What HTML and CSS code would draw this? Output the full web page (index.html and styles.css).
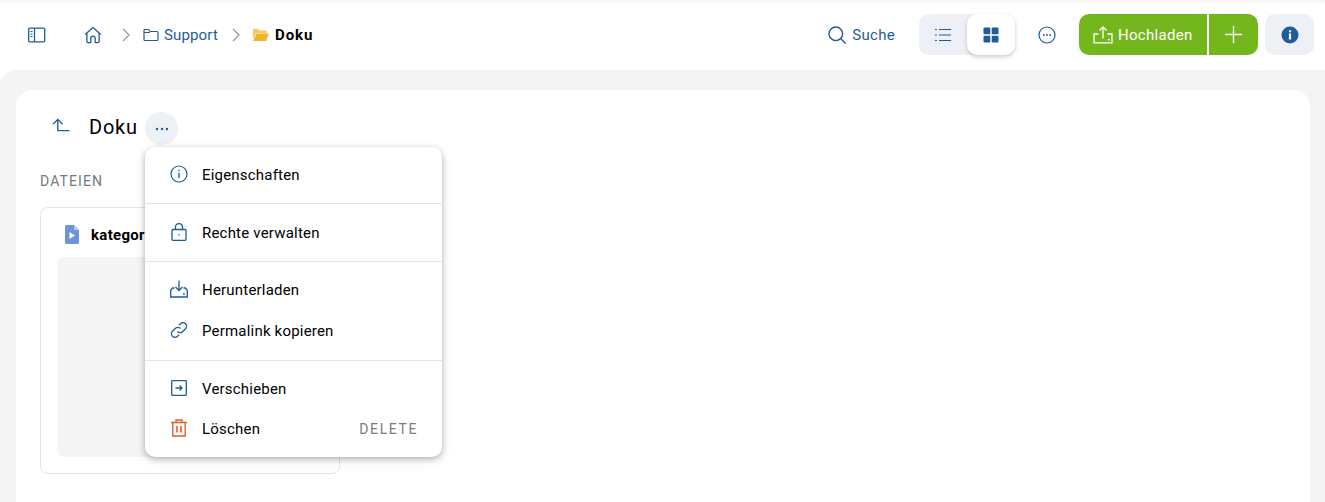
FILE: index.html
```html
<!DOCTYPE html>
<html lang="de">
<head>
<meta charset="utf-8">
<title>Doku</title>
<link rel="stylesheet" href="styles.css">
</head>
<body>
<header class="topbar">
  <button class="plain sidebar-btn" aria-label="Seitenleiste">
    <svg width="20" height="20" viewBox="0 0 20 20" fill="none" stroke="#1f5c99" stroke-width="1.3"><rect x="1.700" y="3.200" width="16" height="13.600" rx="1"/><path d="M7.500 3.200v13.600"/><path d="M3.500 6.500h2M3.500 9h2M3.500 11.500h2" stroke-width="1"/></svg>
  </button>
  <nav class="crumbs">
    <svg class="home" width="20" height="20" viewBox="0 0 20 20" fill="none" stroke="#1f5c99" stroke-width="1.3" stroke-linejoin="round"><path d="M2.200 9.500 10 2.400l7.800 7.100M3.900 8v8.600a1 1 0 0 0 1 1h2.900v-4.300a2.200 2.200 0 0 1 4.400 0v4.300h2.900a1 1 0 0 0 1-1V8"/></svg>
    <svg class="chev" width="10" height="16" viewBox="0 0 10 16" fill="none" stroke="#8f9bab" stroke-width="1.300"><path d="m2 2 6 6-6 6"/></svg>
    <svg class="folder" width="16" height="14" viewBox="0 0 16 14" fill="none" stroke="#1f5c99" stroke-width="1.200"><path d="M1 2.500a1 1 0 0 1 1-1h3.600l1.400 2h7a1 1 0 0 1 1 1v7a1 1 0 0 1-1 1H2a1 1 0 0 1-1-1zM1 4.500h6"/></svg>
    <span class="crumb-link">Support</span>
    <svg class="chev" width="10" height="16" viewBox="0 0 10 16" fill="none" stroke="#8f9bab" stroke-width="1.300"><path d="m2 2 6 6-6 6"/></svg>
    <svg class="folder" width="16" height="12" viewBox="0 0 16 12"><path d="M0 1a1 1 0 0 1 1-1h4l1.500 1.500H13a1 1 0 0 1 1 1V4H3.500L0 10z" fill="#f4c95d"/><path d="M3.600 4.500H16L13 12H0z" fill="#efb428"/></svg>
    <span class="crumb-current">Doku</span>
  </nav>
  <div class="tools">
    <div class="search">
      <svg width="20" height="20" viewBox="0 0 20 20" fill="none" stroke="#1f5c99" stroke-width="1.400"><circle cx="8.800" cy="8.800" r="6.800"/><path d="m13.800 13.800 4.800 4.800"/></svg>
      <span>Suche</span>
    </div>
    <div class="switch">
      <span class="switch-opt">
        <svg width="18" height="14" viewBox="0 0 18 14" fill="none" stroke="#1f5c99" stroke-width="1.200"><path d="M5 1.500h12M5 7h12M5 12.500h12"/><path d="M1 1.500h1.800M1 7h1.800M1 12.500h1.800"/></svg>
      </span>
      <span class="switch-opt active">
        <svg width="16" height="16" viewBox="0 0 16 16" fill="#1f5c99"><rect x="0.500" y="0.500" width="6.800" height="6.800" rx="1"/><rect x="8.700" y="0.500" width="6.800" height="6.800" rx="1"/><rect x="0.500" y="8.700" width="6.800" height="6.800" rx="1"/><rect x="8.700" y="8.700" width="6.800" height="6.800" rx="1"/></svg>
      </span>
    </div>
    <button class="plain more-btn" aria-label="Mehr">
      <svg width="18" height="18" viewBox="0 0 18 18" fill="none" stroke="#1f5c99" stroke-width="1.200"><circle cx="9" cy="9" r="8"/><circle cx="5.800" cy="9" r=".9" fill="#1f5c99" stroke="none"/><circle cx="9" cy="9" r=".9" fill="#1f5c99" stroke="none"/><circle cx="12.200" cy="9" r=".9" fill="#1f5c99" stroke="none"/></svg>
    </button>
    <div class="upload">
      <span class="upload-main">
        <svg width="20" height="18" viewBox="0 0 20 18" fill="none" stroke="#fff" stroke-width="1.300"><path d="M5.500 8H1v8.800h18V8h-4.500"/><path d="M10 12.500V1M6.500 4.500 10 1l3.500 3.500"/><path d="M15 13.800h1.800"/></svg>
        Hochladen
      </span>
      <span class="upload-plus">
        <svg width="17" height="17" viewBox="0 0 17 17" stroke="#fff" stroke-width="1.400"><path d="M8.500 0v17M0 8.500h17"/></svg>
      </span>
    </div>
    <button class="info-btn" aria-label="Info">
      <svg width="18" height="18" viewBox="0 0 18 18"><circle cx="9" cy="9" r="8.500" fill="#1f5c99"/><rect x="7.900" y="7.500" width="2.200" height="6" fill="#fff"/><rect x="7.900" y="4.300" width="2.200" height="2" fill="#fff"/></svg>
    </button>
  </div>
</header>
<main class="shell">
  <section class="panel">
    <div class="title-row">
      <svg class="back" width="18" height="14" viewBox="0 0 18 14" fill="none" stroke="#1f5c99" stroke-width="1.300"><path d="M17.500 12.700H5.800V1.500M1 6.200l4.800-4.800 4.800 4.800"/></svg>
      <h1>Doku</h1>
      <div class="menu-anchor">
        <button class="dots" aria-label="Aktionen">
          <svg width="14" height="4" viewBox="0 0 14 4" fill="#1f5c99"><circle cx="2" cy="2" r="1.200"/><circle cx="7" cy="2" r="1.200"/><circle cx="12" cy="2" r="1.200"/></svg>
        </button>
        <div class="menu">
          <div class="group">
            <div class="item">
              <svg width="18" height="18" viewBox="0 0 18 18" fill="none" stroke="#1f5c99" stroke-width="1.200"><circle cx="9" cy="9" r="8"/><path d="M9 8v5" stroke-width="1.400"/><path d="M9 4.800v1.500" stroke-width="1.400"/></svg>
              <span>Eigenschaften</span>
            </div>
          </div>
          <div class="group group-single">
            <div class="item">
              <svg width="18" height="18" viewBox="0 0 18 18" fill="none" stroke="#1f5c99" stroke-width="1.300"><rect x="2" y="6.500" width="14" height="10.800" rx="1"/><path d="M5.500 6.500V4a3.500 3.500 0 0 1 7 0v2.500"/><circle cx="9" cy="11.800" r=".8" fill="#1f5c99" stroke="none"/></svg>
              <span>Rechte verwalten</span>
            </div>
          </div>
          <div class="group group-pair">
            <div class="item">
              <svg width="18" height="18" viewBox="0 0 18 18" fill="none" stroke="#1f5c99" stroke-width="1.300"><path d="M4.500 8H2.500L.7 10.500V17h16.600v-6.500L15.500 8h-2"/><path d="M9 .5v10M5.500 7 9 10.500 12.500 7"/><path d="M13 14h1.800"/></svg>
              <span>Herunterladen</span>
            </div>
            <div class="item">
              <svg width="18" height="18" viewBox="0 0 18 18" fill="none" stroke="#1f5c99" stroke-width="1.300"><path d="M7.500 10.500a3.400 3.400 0 0 0 5 .2l3-3a3.500 3.500 0 0 0-5-5L9 4.200"/><path d="M10.500 7.500a3.400 3.400 0 0 0-5-.2l-3 3a3.500 3.500 0 0 0 5 5L9 13.800"/></svg>
              <span>Permalink kopieren</span>
            </div>
          </div>
          <div class="group group-pair">
            <div class="item">
              <svg width="18" height="18" viewBox="0 0 18 18" fill="none" stroke="#1f5c99" stroke-width="1.300"><rect x="1.700" y="1.700" width="14.600" height="14.600" rx=".5"/><path d="M5.500 9H12M9.500 6.500 12 9l-2.500 2.500"/></svg>
              <span>Verschieben</span>
            </div>
            <div class="item">
              <svg width="18" height="18" viewBox="0 0 18 18" fill="none" stroke="#e0602a" stroke-width="1.400"><path d="M1 3.500h16M6 3.500V1h6v2.500M2.800 3.500V17h12.400V3.500"/><path d="M7 7v6.500M11 7v6.500" stroke-width="1.600"/></svg>
              <span>Löschen</span>
              <kbd>DELETE</kbd>
            </div>
          </div>
        </div>
      </div>
    </div>
    <h2>DATEIEN</h2>
    <article class="file">
      <div class="file-head">
        <svg width="14" height="19" viewBox="0 0 14 19"><path d="M1.500 0H9l5 5v12.500a1.500 1.500 0 0 1-1.500 1.500h-11A1.500 1.500 0 0 1 0 17.500v-16A1.500 1.500 0 0 1 1.500 0z" fill="#6f93d8"/><path d="M9 0l5 5H9z" fill="#b5c7ea"/><path d="M4.500 7v7l5.500-3.500z" fill="#fff"/></svg>
        <span>kategorie.mp4</span>
      </div>
      <div class="preview"></div>
    </article>
  </section>
</main>
</body>
</html>
```
FILE: styles.css
```css
* { box-sizing: border-box; }
html, body { margin: 0; height: 100%; }
body {
  width: 1325px;
  height: 502px;
  overflow: hidden;
  background: #fff;
  font-family: Roboto, "Liberation Sans", sans-serif;
  color: #000;
  display: flex;
  flex-direction: column;
}
svg { display: block; flex: none; }
button { border: 0; padding: 0; background: none; font: inherit; }

.topbar {
  height: 70px;
  flex: none;
  display: flex;
  align-items: center;
  padding: 0 11px 1px 27px;
  background: linear-gradient(#f3f3f3, #fff 4px);
}
.sidebar-btn { margin-right: 36px; }
.crumbs { display: flex; align-items: center; }
.home { margin-right: 18px; }
.crumbs .chev { margin-right: 12px; }
.crumbs .folder { margin-right: 5px; }
.crumb-link { font-size: 15px; letter-spacing: .15px; color: #1f5c99; margin-right: 13px; }
.crumb-current { font-size: 15px; font-weight: 700; letter-spacing: .9px; margin-left: 1px; }

.tools { margin-left: auto; display: flex; align-items: center; }
.search {
  display: flex;
  align-items: center;
  gap: 5px;
  font-size: 15px;
  letter-spacing: .3px;
  color: #1f5c99;
  margin-right: 24px;
}
.switch {
  display: flex;
  width: 96px;
  height: 41px;
  background: #edf0f5;
  border-radius: 10px;
  margin-right: 23px;
}
.switch-opt {
  width: 48px;
  display: flex;
  align-items: center;
  justify-content: center;
}
.switch-opt.active {
  background: #fff;
  border-radius: 10px;
  box-shadow: 0 2px 4px rgba(0, 0, 0, .2);
}
.more-btn { margin-right: 23px; }
.upload {
  display: flex;
  height: 41px;
  border-radius: 10px;
  overflow: hidden;
  background: #74b71c;
  color: #fff;
  font-size: 15px;
  letter-spacing: .3px;
  margin-right: 7px;
}
.upload-main {
  width: 130px;
  display: flex;
  align-items: center;
  gap: 5px;
  padding-left: 14px;
  border-right: 2px solid #fff;
}
.upload-plus {
  width: 49px;
  display: flex;
  align-items: center;
  justify-content: center;
}
.info-btn {
  width: 49px;
  height: 41px;
  background: #edf0f5;
  border-radius: 10px;
  display: flex;
  align-items: center;
  justify-content: center;
}

.shell {
  flex: 1;
  min-height: 0;
  background: #f4f4f4;
  border-radius: 16px 0 0 0;
  padding: 20px 15px 0 16px;
}
.panel {
  height: 100%;
  background: #fff;
  border-radius: 16px 16px 0 0;
  padding: 22px 24px 0;
}
.title-row { display: flex; align-items: center; height: 33px; }
.back { margin: -7px 0 0 12px; }
.title-row h1 {
  margin: -4px 8px 0 19px;
  width: 48px;
  font-size: 20px;
  font-weight: 400;
  letter-spacing: .75px;
}
.menu-anchor { position: relative; }
.dots {
  width: 33px;
  height: 33px;
  border-radius: 50%;
  background: #edf0f5;
  display: flex;
  align-items: center;
  justify-content: center;
}
.menu {
  position: absolute;
  left: 0;
  top: 35px;
  width: 297px;
  height: 310px;
  background: #fff;
  border-radius: 10px;
  box-shadow: 0 2px 6px rgba(0, 0, 0, .28), 0 4px 14px rgba(0, 0, 0, .06);
  z-index: 5;
}
.group { padding: 7px 0 8px; border-bottom: 1px solid #e4e4e4; }
.group-single { padding: 8px 0; }
.group-pair { padding: 7px 0 9px; }
.group:last-child { border-bottom: 0; padding-top: 8px; }
.group:last-child .item { height: 40px; }
.item {
  height: 41px;
  display: flex;
  align-items: center;
  padding: 0 25px;
  gap: 14px;
  font-size: 15px;
  letter-spacing: .2px;
}
.item svg { margin-top: -2px; }
.item kbd {
  margin-left: auto;
  margin-right: -1px;
  font: 14px Roboto, "Liberation Sans", sans-serif;
  letter-spacing: 1.600px;
  color: #7b7b7b;
}

.panel h2 {
  margin: 28px 0 18px;
  font-size: 14px;
  line-height: 16px;
  font-weight: 400;
  letter-spacing: 1.100px;
  color: #6f7a85;
}
.file {
  width: 300px;
  height: 267px;
  border: 1px solid #e4e4e4;
  border-radius: 8px;
  padding: 0 16px;
}
.file-head {
  height: 49px;
  display: flex;
  align-items: center;
  gap: 12px;
  padding: 4px 8px 0;
  font-size: 15px;
  font-weight: 700;
  letter-spacing: .3px;
  white-space: nowrap;
}
.preview {
  height: 200px;
  background: #f4f4f4;
  border-radius: 8px;
}
```
